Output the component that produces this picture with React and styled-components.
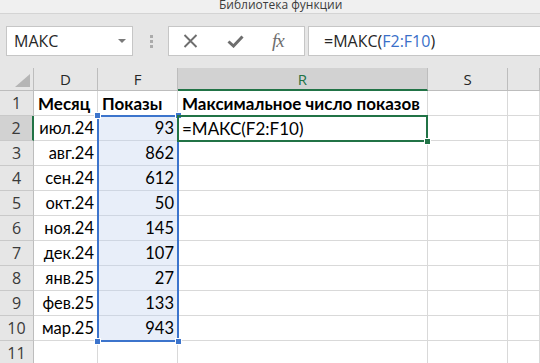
import React from "react";
import styled, { createGlobalStyle } from "styled-components";

const GlobalStyle = createGlobalStyle`
  html, body {
    margin: 0;
    padding: 0;
    background: #ffffff;
  }
  body {
    width: 540px;
    height: 363px;
    overflow: hidden;
  }
`;

const GREEN = "#217346";
const BLUE = "#3c74cc";

const Window = styled.div`
  width: 540px;
  height: 363px;
  overflow: hidden;
  display: flex;
  flex-direction: column;
  background: #e6e6e6;
`;

const TitleStrip = styled.div`
  height: 13px;
  flex-shrink: 0;
  background: #f0f0f0;
  border-bottom: 1px solid #d4d4d4;
  padding-left: 219px;
  font-family: "Open Sans", "Noto Sans", sans-serif;
  font-size: 12px;
  line-height: 10px;
  color: #3c3c3c;
  overflow: hidden;
  white-space: nowrap;
`;

const FormulaBar = styled.div`
  height: 54px;
  flex-shrink: 0;
  display: flex;
  align-items: center;
  padding-left: 6px;
  box-sizing: border-box;
`;

const NameBox = styled.div`
  width: 127px;
  height: 30px;
  box-sizing: border-box;
  background: #fff;
  border: 1px solid #c6c6c6;
  display: flex;
  align-items: center;
  justify-content: space-between;
  padding: 0 6px 0 7px;
  font-family: "Open Sans", "Noto Sans", sans-serif;
  font-size: 16px;
  color: #262626;
`;

const Caret = styled.span`
  width: 0;
  height: 0;
  border-left: 4px solid transparent;
  border-right: 4px solid transparent;
  border-top: 4px solid #7a7a7a;
`;

const Grip = styled.div`
  margin: 0 15px 0 17px;
  display: flex;
  flex-direction: column;
  gap: 2px;
  span {
    width: 3px;
    height: 3px;
    background: #ababab;
  }
`;

const FxBox = styled.div`
  width: 137px;
  height: 30px;
  box-sizing: border-box;
  background: #fff;
  border: 1px solid #c6c6c6;
  display: flex;
  align-items: center;
  gap: 29px;
  padding-left: 14px;
`;

const FxLabel = styled.span`
  font-family: "Liberation Serif", serif;
  font-style: italic;
  font-size: 19px;
  color: #6e6e6e;
  letter-spacing: -1px;
  margin-left: -1px;
`;

const FormulaInput = styled.div`
  flex: 1;
  height: 30px;
  margin-left: 3px;
  box-sizing: border-box;
  background: #fff;
  border: 1px solid #c6c6c6;
  border-right: none;
  display: flex;
  align-items: center;
  padding-left: 15px;
  font-family: "Open Sans", "Noto Sans", sans-serif;
  font-size: 16px;
  color: #262626;
`;

const Ref = styled.span`
  color: #3a6fc9;
`;

const Sheet = styled.div`
  flex: 1;
  display: grid;
  grid-template-columns: 34px 64px 80px 250px 80px 1fr;
  grid-template-rows: 23px repeat(11, 25px);
  background: #fff;
`;

const Corner = styled.div`
  grid-column: 1;
  grid-row: 1;
  background: #e6e6e6;
  border-right: 1px solid #bdbdbd;
  border-bottom: 1px solid #bdbdbd;
  display: flex;
  align-items: flex-end;
  justify-content: flex-end;
  padding: 0 3px 3px 0;
`;

const ColHead = styled.div`
  grid-column: ${(p) => p.$col};
  grid-row: 1;
  background: ${(p) => (p.$active ? "#d2d2d2" : "#e6e6e6")};
  color: ${(p) => (p.$active ? GREEN : "#262626")};
  border-right: 1px solid #bdbdbd;
  border-bottom: ${(p) => (p.$active ? `2px solid ${GREEN}` : "1px solid #bdbdbd")};
  display: flex;
  align-items: center;
  justify-content: center;
  font-family: "Open Sans", "Noto Sans", sans-serif;
  font-size: 15px;
`;

const RowHead = styled.div`
  grid-column: 1;
  grid-row: ${(p) => p.$row};
  background: ${(p) => (p.$active ? "#d2d2d2" : "#e6e6e6")};
  color: #3a3a3a;
  border-right: ${(p) => (p.$active ? `2px solid ${GREEN}` : "1px solid #bdbdbd")};
  border-bottom: 1px solid #c9c9c9;
  display: flex;
  align-items: center;
  justify-content: center;
  font-family: "Open Sans", "Noto Sans", sans-serif;
  font-size: 16px;
`;

const Cell = styled.div`
  grid-column: ${(p) => p.$col};
  grid-row: ${(p) => p.$row};
  background: ${(p) => (p.$hl ? "#e8eef9" : "#fff")};
  border-right: 1px solid ${(p) => (p.$hl ? "#cfd6e2" : "#d9d9d9")};
  border-bottom: 1px solid ${(p) => (p.$hl ? "#cfd6e2" : "#d9d9d9")};
  display: flex;
  align-items: center;
  justify-content: ${(p) => (p.$right ? "flex-end" : "flex-start")};
  padding: 0 3px 0 4px;
  overflow: visible;
  white-space: nowrap;
  font-family: Lato, "Open Sans", sans-serif;
  font-size: ${(p) => (p.$bold || p.$large ? "17px" : "16.5px")};
  font-weight: ${(p) => (p.$bold ? 700 : 400)};
  color: #000;
`;

const RangeBox = styled.div`
  grid-column: 3;
  grid-row: 3 / 12;
  margin: -1px;
  border: 2px solid ${BLUE};
  position: relative;
  z-index: 2;
  pointer-events: none;
`;

const ActiveBox = styled.div`
  grid-column: 4;
  grid-row: 3;
  margin: -1px 0 -1px -1px;
  border: 2px solid ${GREEN};
  position: relative;
  z-index: 3;
  pointer-events: none;
`;

const Handle = styled.span`
  position: absolute;
  width: 5px;
  height: 5px;
  background: ${(p) => p.$color};
  border: 1px solid #fff;
  ${(p) => (p.$top ? "top: -5px;" : "bottom: -5px;")}
  ${(p) => (p.$left ? "left: -5px;" : "right: -5px;")}
`;

const columns = [
  { key: "D", col: 2 },
  { key: "F", col: 3 },
  { key: "R", col: 4, active: true },
  { key: "S", col: 5 },
  { key: "", col: 6 },
];

const data = [
  ["июл.24", 93],
  ["авг.24", 862],
  ["сен.24", 612],
  ["окт.24", 50],
  ["ноя.24", 145],
  ["дек.24", 107],
  ["янв.25", 27],
  ["фев.25", 133],
  ["мар.25", 943],
];

const CrossIcon = () => (
  <svg width="15" height="14" viewBox="0 0 15 14">
    <path d="M1.5 1 L13.5 13 M13.5 1 L1.5 13" stroke="#6e6e6e" strokeWidth="1.9" fill="none" />
  </svg>
);

const CheckIcon = () => (
  <svg width="17" height="13" viewBox="0 0 17 13">
    <path d="M1.5 6.5 L6.5 11 L15.5 1.5" stroke="#6e6e6e" strokeWidth="3" fill="none" />
  </svg>
);

const CornerMark = () => (
  <svg width="15" height="13" viewBox="0 0 15 13">
    <polygon points="15,0 15,13 0,13" fill="#b5b5b5" />
  </svg>
);

const App = () => {
  const rows = [];
  for (let r = 1; r <= 11; r++) {
    const gr = r + 1;
    rows.push(
      <RowHead key={"h" + r} $row={gr} $active={r === 2}>
        {r}
      </RowHead>
    );
    const d = r === 1 ? "Месяц" : data[r - 2] ? data[r - 2][0] : "";
    const f = r === 1 ? "Показы" : data[r - 2] ? data[r - 2][1] : "";
    const rv = r === 1 ? "Максимальное число показов" : r === 2 ? "=МАКС(F2:F10)" : "";
    const hl = r >= 2 && r <= 10;
    rows.push(
      <Cell key={"d" + r} $row={gr} $col={2} $right={r > 1} $bold={r === 1}>
        {d}
      </Cell>,
      <Cell key={"f" + r} $row={gr} $col={3} $right={r > 1} $bold={r === 1} $hl={hl}>
        {f}
      </Cell>,
      <Cell key={"r" + r} $row={gr} $col={4} $bold={r === 1} $large={r === 2}>
        {rv}
      </Cell>,
      <Cell key={"s" + r} $row={gr} $col={5} />,
      <Cell key={"t" + r} $row={gr} $col={6} />
    );
  }

  return (
    <>
      <GlobalStyle />
      <Window>
        <TitleStrip>Библиотека функции</TitleStrip>
        <FormulaBar>
          <NameBox>
            МАКС
            <Caret />
          </NameBox>
          <Grip>
            <span />
            <span />
            <span />
          </Grip>
          <FxBox>
            <CrossIcon />
            <CheckIcon />
            <FxLabel>fx</FxLabel>
          </FxBox>
          <FormulaInput>
            =МАКС(<Ref>F2:F10</Ref>)
          </FormulaInput>
        </FormulaBar>
        <Sheet>
          <Corner>
            <CornerMark />
          </Corner>
          {columns.map((c) => (
            <ColHead key={c.col} $col={c.col} $active={c.active}>
              {c.key}
            </ColHead>
          ))}
          {rows}
          <RangeBox>
            <Handle $color={BLUE} $top $left />
            <Handle $color={BLUE} $top />
            <Handle $color={BLUE} $left />
            <Handle $color={BLUE} />
          </RangeBox>
          <ActiveBox>
            <Handle $color={GREEN} />
          </ActiveBox>
        </Sheet>
      </Window>
    </>
  );
};

export default App;
